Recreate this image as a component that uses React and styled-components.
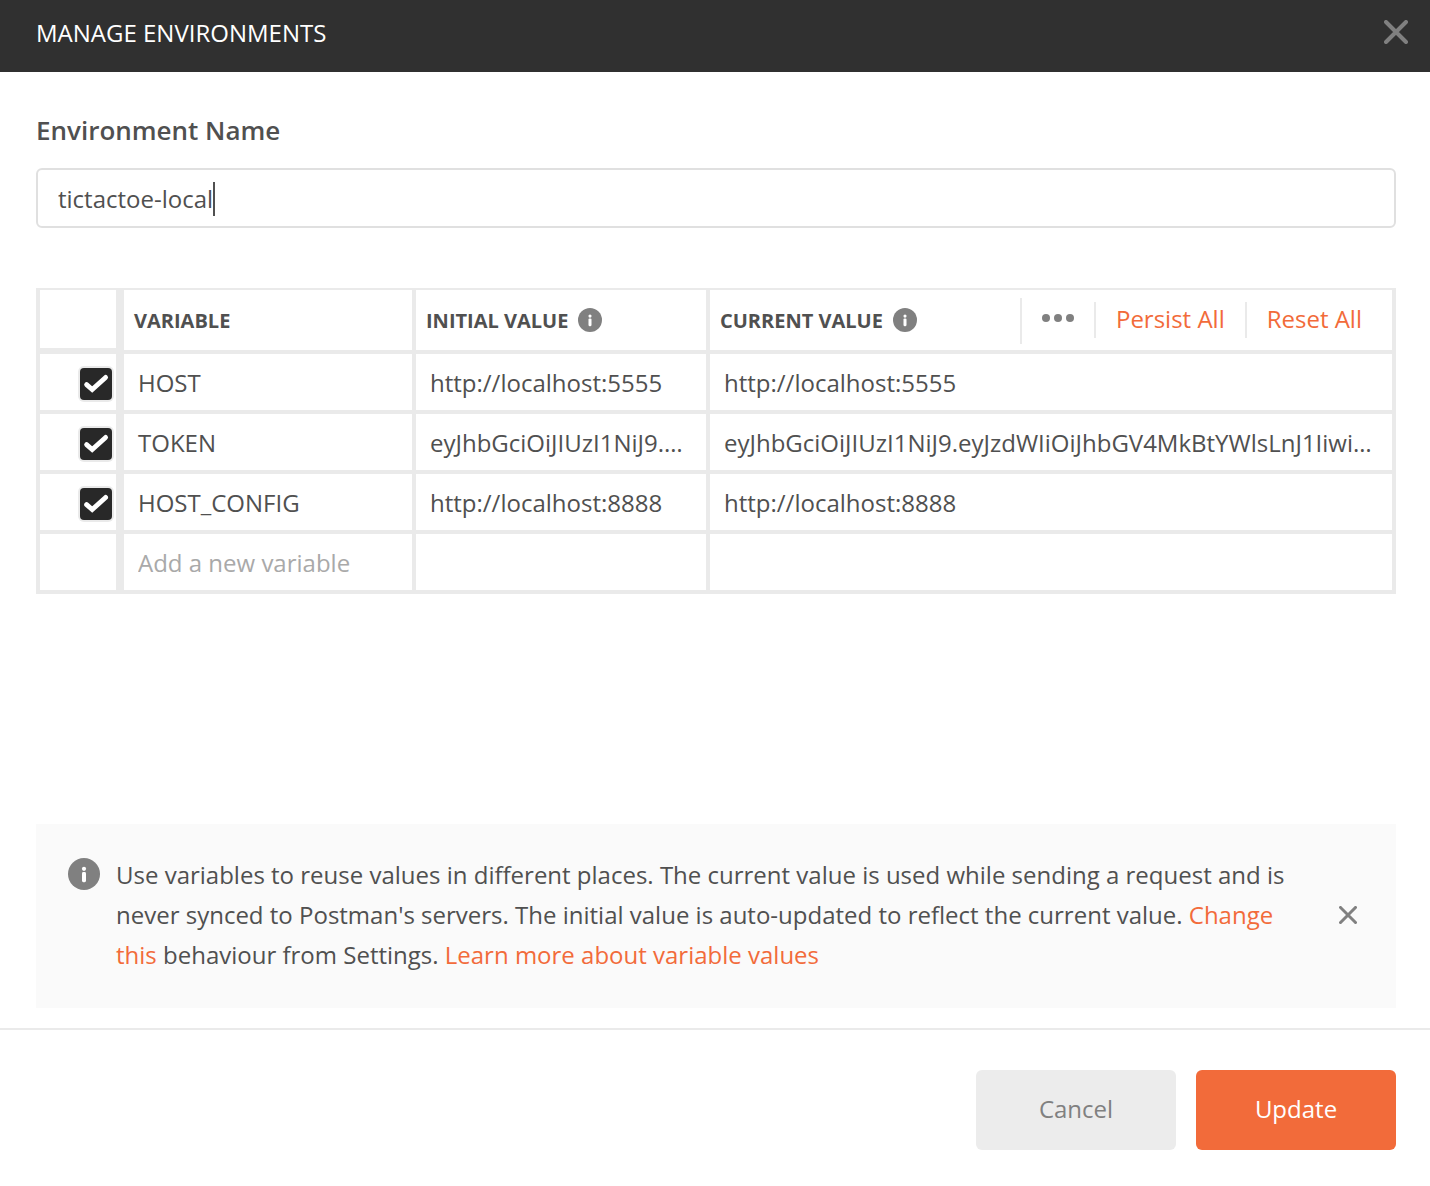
import React, { useState } from "react";
import styled, { createGlobalStyle, css } from "styled-components";

const color = {
  text: "#505050",
  muted: "#808080",
  placeholder: "#a9a9a9",
  line: "#eaeaea",
  accent: "#f26b3a",
  dark: "#303030",
};

const GlobalStyle = createGlobalStyle`
  *, *::before, *::after { box-sizing: border-box; }
  body {
    margin: 0;
    background: #fff;
    color: ${color.text};
    font-family: "Open Sans", "Noto Sans", sans-serif;
    font-size: 24px;
    line-height: 32px;
  }
  button, input { font: inherit; color: inherit; }
`;

const Dialog = styled.div`
  display: flex;
  flex-direction: column;
  min-height: 100vh;
`;

const Header = styled.header`
  display: flex;
  align-items: flex-start;
  justify-content: space-between;
  padding: 16px 18px 22px 36px;
  background: ${color.dark};
  color: #fff;
`;

const Title = styled.h1`
  margin: 0;
  font-size: 24px;
  font-weight: 400;
  line-height: 34px;
  text-transform: uppercase;
`;

const IconButton = styled.button`
  display: grid;
  place-items: center;
  flex: none;
  width: 32px;
  height: 32px;
  padding: 0;
  border: 0;
  background: none;
  color: ${color.muted};
  cursor: pointer;
`;

const Body = styled.main`
  display: flex;
  flex: 1;
  flex-direction: column;
  padding: 42px 34px 20px 36px;
`;

const FieldLabel = styled.label`
  margin-bottom: 22px;
  font-size: 26px;
  font-weight: 600;
`;

const Field = styled.div`
  display: flex;
  align-items: center;
  height: 60px;
  margin-bottom: 60px;
  padding: 2px 20px 0;
  border: 2px solid #e0e0e0;
  border-radius: 6px;
`;

const NameInput = styled.input`
  field-sizing: content;
  padding: 0;
  border: 0;
  outline: 0;
  background: none;
  caret-color: transparent;
`;

const Caret = styled.span`
  width: 2px;
  height: 34px;
  background: ${color.text};
`;

const Table = styled.table`
  width: 100%;
  table-layout: fixed;
  border-collapse: separate;
  border-spacing: 0;
  border-top: 2px solid ${color.line};
  border-left: 4px solid ${color.line};
`;

const Col = styled.col`
  width: ${(p) => p.$width};
`;

const cell = css`
  border-right: 4px solid ${color.line};
  border-bottom: 4px solid ${color.line};
  text-align: left;
  vertical-align: middle;
`;

const HeadCell = styled.th`
  ${cell}
  height: 64px;
  padding: 2px 10px 0;
  font-size: 20px;
  font-weight: 700;
  ${(p) => p.$select && css`
    border-right-width: 8px;
    border-bottom-width: 6px;
  `}
`;

const HeadContent = styled.div`
  display: flex;
  align-items: center;
  gap: 10px;
  white-space: nowrap;
  > svg { margin-bottom: 2px; }
`;

const Cell = styled.td`
  ${cell}
  height: 60px;
  padding: 2px 14px 0;
  overflow: hidden;
  text-overflow: ellipsis;
  white-space: nowrap;
`;

const SelectCell = styled(Cell)`
  padding: 4px 4px 0;
  border-right-width: 8px;
`;

const NewVariable = styled.input`
  display: block;
  width: 100%;
  padding: 0;
  border: 0;
  outline: 0;
  background: none;
  &::placeholder { color: ${color.placeholder}; opacity: 1; }
`;

const CheckBox = styled.span`
  display: grid;
  width: 32px;
  margin-left: auto;
  > * { grid-area: 1 / 1; }
  svg { pointer-events: none; }
`;

const CheckInput = styled.input`
  appearance: none;
  width: 32px;
  height: 32px;
  margin: 0;
  border-radius: 4px;
  background: #fff;
  box-shadow: 0 0 0 2px ${color.line};
  &:checked { background: #282828; }
`;

const Actions = styled.div`
  display: flex;
  align-items: center;
  height: 46px;
  margin-left: auto;
  padding: 0 0 2px 20px;
  border-left: 2px solid ${color.line};
`;

const TextAction = styled.button`
  height: 36px;
  padding: 0 20px 2px;
  border: 0;
  border-left: 2px solid ${color.line};
  background: none;
  color: ${color.accent};
  font-size: 24px;
  font-weight: 400;
  line-height: 32px;
  cursor: pointer;
`;

const MoreButton = styled(IconButton)`
  margin-right: 20px;
`;

const Notice = styled.section`
  display: flex;
  gap: 16px;
  margin-top: auto;
  padding: 31px 32px 33px;
  background: #fafafa;
  line-height: 40px;
`;

const NoticeIcon = styled.span`
  display: flex;
  flex: none;
  padding-top: 3px;
`;

const NoticeText = styled.p`
  flex: 1;
  margin: 0 16px 0 0;
`;

const Link = styled.a`
  color: ${color.accent};
  text-decoration: none;
`;

const DismissButton = styled(IconButton)`
  align-self: center;
`;

const Footer = styled.footer`
  display: flex;
  justify-content: flex-end;
  gap: 20px;
  padding: 40px 34px 36px;
  border-top: 2px solid ${color.line};
`;

const Button = styled.button`
  width: 200px;
  height: 80px;
  padding: 0 0 2px;
  border: 0;
  border-radius: 6px;
  background: ${(p) => (p.$primary ? color.accent : "#ececec")};
  color: ${(p) => (p.$primary ? "#fff" : color.muted)};
  cursor: pointer;
`;

function CrossIcon({ size, stroke, cap }) {
  const a = stroke / 2;
  const b = size - a;
  return (
    <svg width={size} height={size} viewBox={`0 0 ${size} ${size}`} aria-hidden="true">
      <path d={`M${a} ${a}L${b} ${b}M${b} ${a}L${a} ${b}`} stroke="currentColor" strokeWidth={stroke} strokeLinecap={cap} />
    </svg>
  );
}

function InfoIcon({ size }) {
  return (
    <svg width={size} height={size} viewBox="0 0 32 32" role="img" aria-label="Info">
      <circle cx="16" cy="16" r="16" fill={color.muted} />
      <circle cx="16" cy="10.8" r="2.1" fill="#fff" />
      <rect x="14" y="14" width="4" height="10.2" rx="1.4" fill="#fff" />
    </svg>
  );
}

function CheckIcon() {
  return (
    <svg width="32" height="32" viewBox="0 0 32 32" fill="none" aria-hidden="true">
      <path d="M6.6 16.6L12.2 21.6L25.6 9.4" stroke="#fff" strokeWidth="4.8" strokeLinecap="round" strokeLinejoin="miter" />
    </svg>
  );
}

function DotsIcon() {
  return (
    <svg width="32" height="12" viewBox="0 0 32 12" fill="currentColor" aria-hidden="true">
      <circle cx="4" cy="4" r="4" />
      <circle cx="16" cy="4" r="4" />
      <circle cx="28" cy="4" r="4" />
    </svg>
  );
}

const token = "eyJhbGciOiJIUzI1NiJ9.eyJzdWIiOiJhbGV4MkBtYWlsLnJ1IiwicmFuZG9tIjoxfQ";

const variables = [
  { name: "HOST", value: "http://localhost:5555" },
  { name: "TOKEN", value: token },
  { name: "HOST_CONFIG", value: "http://localhost:8888" },
];

export default function App() {
  const [name, setName] = useState("tictactoe-local");

  return (
    <Dialog role="dialog" aria-labelledby="dialog-title">
      <GlobalStyle />
      <Header>
        <Title id="dialog-title">Manage Environments</Title>
        <IconButton type="button" aria-label="Close">
          <CrossIcon size={24} stroke={4} cap="round" />
        </IconButton>
      </Header>

      <Body>
        <FieldLabel htmlFor="environment-name">Environment Name</FieldLabel>
        <Field>
          <NameInput id="environment-name" value={name} onChange={(e) => setName(e.target.value)} />
          <Caret />
        </Field>

        <Table>
          <colgroup>
            <Col $width="84px" />
            <Col $width="292px" />
            <Col $width="294px" />
            <Col $width="auto" />
          </colgroup>
          <thead>
            <tr>
              <HeadCell $select aria-label="Enabled" />
              <HeadCell scope="col">VARIABLE</HeadCell>
              <HeadCell scope="col">
                <HeadContent>INITIAL VALUE <InfoIcon size={24} /></HeadContent>
              </HeadCell>
              <HeadCell scope="col">
                <HeadContent>
                  CURRENT VALUE <InfoIcon size={24} />
                  <Actions>
                    <MoreButton type="button" aria-label="More options"><DotsIcon /></MoreButton>
                    <TextAction type="button">Persist All</TextAction>
                    <TextAction type="button">Reset All</TextAction>
                  </Actions>
                </HeadContent>
              </HeadCell>
            </tr>
          </thead>
          <tbody>
            {variables.map((v) => (
              <tr key={v.name}>
                <SelectCell>
                  <CheckBox>
                    <CheckInput type="checkbox" defaultChecked aria-label={`Enable ${v.name}`} />
                    <CheckIcon />
                  </CheckBox>
                </SelectCell>
                <Cell>{v.name}</Cell>
                <Cell>{v.value}</Cell>
                <Cell>{v.value}</Cell>
              </tr>
            ))}
            <tr>
              <SelectCell />
              <Cell><NewVariable placeholder="Add a new variable" aria-label="New variable name" /></Cell>
              <Cell />
              <Cell />
            </tr>
          </tbody>
        </Table>

        <Notice>
          <NoticeIcon><InfoIcon size={32} /></NoticeIcon>
          <NoticeText>
            Use variables to reuse values in different places. The current value is used while
            sending a request and is never synced to Postman's servers. The initial value is
            auto-updated to reflect the current value. <Link href="#settings">Change this</Link>{" "}
            behaviour from Settings. <Link href="#learn-more">Learn more about variable values</Link>
          </NoticeText>
          <DismissButton type="button" aria-label="Dismiss">
            <CrossIcon size={18} stroke={3} cap="square" />
          </DismissButton>
        </Notice>
      </Body>

      <Footer>
        <Button type="button">Cancel</Button>
        <Button type="button" $primary>Update</Button>
      </Footer>
    </Dialog>
  );
}
